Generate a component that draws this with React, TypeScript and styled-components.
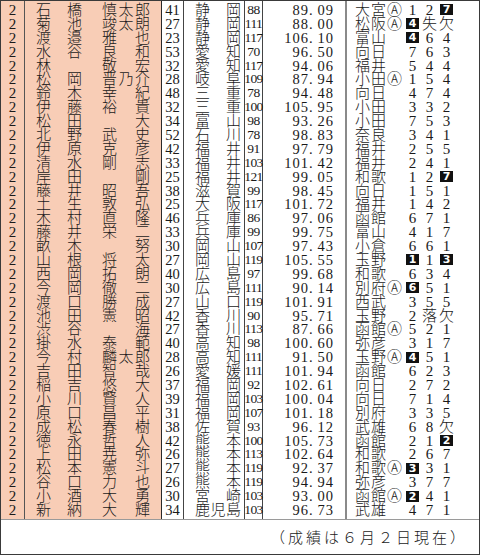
import React from "react";
import styled, { createGlobalStyle } from "styled-components";

const GlobalStyle = createGlobalStyle`
  html, body { margin: 0; padding: 0; background: #ffffff; }
  body {
    font-family: "Liberation Serif", "Noto Sans CJK JP", serif;
    font-weight: 300;
    color: #1a1a1a;
  }
`;

const PINK = "#f8cdb6";
const ROW_H = "13.9px";

const Frame = styled.div`
  width: 480px;
  height: 555px;
  box-sizing: border-box;
  border: 1px solid #3a3a3a;
  display: flex;
  flex-direction: column;
  background: #ffffff;
`;

const Table = styled.div`
  display: flex;
  flex-direction: column;
  border-bottom: 1px solid #9a9a9a;
`;

const Row = styled.div`
  display: grid;
  grid-template-columns: 24px 137px 22px 61px 18px 84px 1fr;
  & > * {
    height: ${ROW_H};
    display: flex;
    align-items: center;
    line-height: 14px;
    white-space: nowrap;
  }
  &:first-child > * { padding-top: 2px; }
  &:last-child > * { padding-bottom: 2px; }
`;

const ClassCell = styled.div`
  background: ${PINK};
  border-right: 1px solid #555;
  justify-content: center;
  font-size: 15px;
`;

const NameCell = styled.div`
  background: ${PINK};
  border-right: 1px solid #2a2a2a;
  padding: 0 11px;
  gap: 20px;
  font-size: 15px;
`;

const Surname = styled.span`
  width: 46px;
  display: flex;
  justify-content: space-between;
`;

const Given = styled.span<{ $single: boolean }>`
  width: 48px;
  display: flex;
  justify-content: ${(p) => (p.$single ? "flex-end" : "space-between")};
`;

const AgeCell = styled.div`
  border-right: 1px solid #444;
  justify-content: center;
  font-size: 14.5px;
`;

const PrefCell = styled.div`
  border-right: 1px solid #444;
  padding-left: 11px;
  font-size: 15px;
`;

const PrefText = styled.span`
  width: 46px;
  display: flex;
  justify-content: space-between;
`;

const NoCell = styled.div`
  border-right: 1px solid #444;
  justify-content: center;
  font-size: 13.5px;
  letter-spacing: -0.6px;
`;

const TimeCell = styled.div`
  border-right: 2px solid #8a8a8a;
  justify-content: flex-end;
  padding-right: 11px;
  font-size: 14.5px;
  letter-spacing: 1px;
`;

const DotGap = styled.span`
  display: inline-block;
  width: 4px;
`;

const ResultCell = styled.div`
  padding-left: 8px;
  font-size: 15px;
`;

const Venue = styled.span`
  width: 49px;
  letter-spacing: 1px;
  display: flex;
`;

const Slot = styled.span`
  width: 17px;
  display: flex;
  justify-content: center;
  align-items: center;
`;

const Boxed = styled.span`
  width: 13px;
  height: 11px;
  background: #111;
  color: #fff;
  display: inline-flex;
  align-items: center;
  justify-content: center;
  font-family: "DejaVu Sans", sans-serif;
  font-weight: 700;
  font-size: 11px;
  line-height: 1;
`;

const Footer = styled.div`
  flex: 1;
  display: flex;
  justify-content: flex-end;
  align-items: center;
  padding-right: 11px;
  font-family: "Noto Sans CJK JP", sans-serif;
  font-size: 15px;
  letter-spacing: 3px;
`;

const RAW = `石橋|慎太郎|41|静岡|88|89.09|大宮Ⓐ|1,2,#7
菊池|竣太朗|27|静岡|111|88.00|松阪Ⓐ|#4,失,欠
渡邉|雅也|23|静岡|117|106.10|富山|#4,6,4
水谷|良和|53|愛知|70|96.50|向日|7,6,3
林|敬宏|32|愛知|117|94.06|福井|5,4,4
松岡|晋乃介|28|岐阜|109|87.94|小田Ⓐ|1,5,4
鈴木|幸紀|48|三重|78|94.48|向日|4,7,4
伊藤|裕貴|32|三重|100|105.95|小田|3,3,2
松田|大|34|富山|98|93.26|小田|7,5,3
北野|武史|52|石川|78|98.83|奈良|3,4,1
伊原|克彦|42|福井|91|97.79|福井|2,5,5
清水|剛志|33|福井|103|101.42|福井|2,4,1
岸田|剛|25|福井|121|99.05|和歌|1,2,#7
藤井|昭吾|38|滋賀|99|98.45|向日|1,5,1
土生|敦弘|25|大阪|117|101.72|福井|1,4,2
木村|直隆|46|兵庫|86|97.06|函館|6,7,1
藤井|栄二|33|兵庫|99|99.75|富山|4,1,7
畝木|努|30|岡山|107|97.43|小倉|6,6,1
山根|将太|27|岡山|119|105.55|玉野|#1,1,#3
西岡|拓朗|40|広島|97|99.68|和歌|6,3,4
今岡|徹二|30|広島|111|90.14|別府Ⓐ|#6,5,1
渡口|勝成|27|山口|119|101.91|西武|3,5,5
池田|憲昭|42|香川|90|95.71|玉野|2,落,欠
渋谷|海|27|香川|113|87.66|函館Ⓐ|5,2,1
掛水|泰範|40|高知|98|100.60|弥彦|3,1,7
今村|麟太郎|28|高知|111|91.50|玉野Ⓐ|#4,5,1
吉田|智哉|26|愛媛|111|101.94|函館|6,2,3
稲吉|悠大|37|福岡|92|102.61|向日|2,7,2
小川|賢人|39|福岡|103|100.04|向日|7,1,4
原口|昌平|31|福岡|107|101.18|別府|3,3,5
成松|春樹|38|佐賀|93|96.12|武雄|6,8,欠
徳永|哲人|42|熊本|100|105.73|函館|2,1,#2
上田|尭弥|26|熊本|113|102.64|和歌|2,6,7
松本|憲斗|27|熊本|119|92.37|和歌Ⓐ|#3,3,1
谷口|力也|26|熊本|119|94.94|弥彦|3,7,7
小酒|大勇|30|宮崎|103|93.00|函館Ⓐ|#2,4,1
新納|大輝|34|鹿児島|103|96.73|武雄|4,7,1`;

type Racer = {
  sur: string;
  given: string;
  age: string;
  pref: string;
  no: string;
  time: string;
  venue: string;
  results: string[];
};

const racers: Racer[] = RAW.split("\n").map((line) => {
  const [sur, given, age, pref, no, time, venue, res] = line.split("|");
  return { sur, given, age, pref, no, time, venue, results: res.split(",") };
});

const chars = (s: string) => Array.from(s).map((c, i) => <span key={i}>{c}</span>);

const Time = ({ value }: { value: string }) => {
  const [i, f] = value.split(".");
  return (
    <>
      {i}.<DotGap />
      {f}
    </>
  );
};

const ResultSlot = ({ v }: { v: string }) => (
  <Slot>{v.startsWith("#") ? <Boxed>{v.slice(1)}</Boxed> : v}</Slot>
);

export default function App() {
  return (
    <>
      <GlobalStyle />
      <Frame>
        <Table>
          {racers.map((r, idx) => (
            <Row key={idx}>
              <ClassCell>2</ClassCell>
              <NameCell>
                <Surname>{chars(r.sur)}</Surname>
                <Given $single={Array.from(r.given).length === 1}>{chars(r.given)}</Given>
              </NameCell>
              <AgeCell>{r.age}</AgeCell>
              <PrefCell>
                <PrefText>{chars(r.pref)}</PrefText>
              </PrefCell>
              <NoCell>{r.no}</NoCell>
              <TimeCell>
                <Time value={r.time} />
              </TimeCell>
              <ResultCell>
                <Venue>{r.venue}</Venue>
                {r.results.map((v, k) => (
                  <ResultSlot key={k} v={v} />
                ))}
              </ResultCell>
            </Row>
          ))}
        </Table>
        <Footer>（成績は６月２日現在）</Footer>
      </Frame>
    </>
  );
}
